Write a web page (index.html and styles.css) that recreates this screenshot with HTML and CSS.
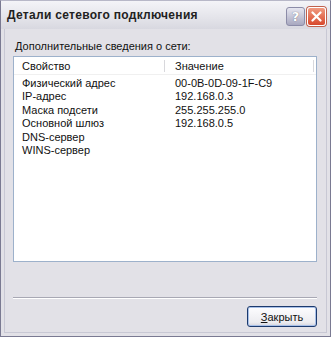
FILE: index.html
```html
<!DOCTYPE html>
<html>
  <head>
    <title>Детали сетевого подключения</title>
    <link rel="stylesheet" href="styles.css">
  </head>
  <body>
    <div class="window">
      <div class="titlebar">
        <span class="title">Детали сетевого подключения</span>
        <div class="buttons">
          <span class="btn-help">?</span>
          <span class="btn-close">
            <svg width="11" height="11" viewBox="0 0 11 11">
              <path d="M1.5 1.5 L9.5 9.5 M9.5 1.5 L1.5 9.5" stroke="#fff" stroke-width="2.2" stroke-linecap="round"/>
            </svg>
          </span>
        </div>
      </div>
      <div class="content">
        <div class="caption"><u>Д</u>ополнительные сведения о сети:</div>
        <div class="listbox">
          <div class="head">
            <div class="col1">Свойство</div>
            <div class="col2">Значение</div>
          </div>
          <table class="rows">
            <tr><td>Физический адрес</td><td>00-0B-0D-09-1F-C9</td></tr>
            <tr><td>IP-адрес</td><td>192.168.0.3</td></tr>
            <tr><td>Маска подсети</td><td>255.255.255.0</td></tr>
            <tr><td>Основной шлюз</td><td>192.168.0.5</td></tr>
            <tr><td>DNS-сервер</td><td></td></tr>
            <tr><td>WINS-сервер</td><td></td></tr>
          </table>
        </div>
        <div class="separator"></div>
        <div class="footer">
          <button class="close-button"><u>З</u>акрыть</button>
        </div>
      </div>
    </div>
  </body>
</html>
```

FILE: styles.css
```css
body {
  margin: 0;
  background-color: #fff;
  font-family: "DejaVu Sans", sans-serif;
}
.window {
  width: 331px;
  height: 337px;
  box-sizing: border-box;
  border: 1px solid #7a7a92;
  border-top-color: #b8b8c8;
  background-color: #e2e1e7;
  display: flex;
  flex-direction: column;
}
.titlebar {
  height: 28px;
  display: flex;
  align-items: center;
  justify-content: space-between;
  padding: 0 4px 0 6px;
  background: linear-gradient(#f4f4f8, #e4e4ea 60%, #d8d8e0);
}
.title {
  font-family: "Liberation Sans", sans-serif;
  font-weight: bold;
  font-size: 12px;
  letter-spacing: 0.3px;
  color: #222;
}
.buttons {
  display: flex;
  gap: 2px;
  margin-top: 2px;
}
.btn-help,
.btn-close {
  width: 19px;
  height: 19px;
  box-sizing: border-box;
  border-radius: 3px;
  display: flex;
  align-items: center;
  justify-content: center;
}
.btn-help {
  background: linear-gradient(#e6e6f0, #a8a8c0);
  border: 1px solid #8c8ca8;
  color: #fff;
  font-weight: bold;
  font-size: 13px;
  text-shadow: 0 0 1px #556;
}
.btn-close {
  background: linear-gradient(#f09a80, #d8482c);
  border: 1px solid #fff;
  box-shadow: 0 0 0 1px #c0604c;
}
.content {
  flex: 1;
  margin: 0 3px 3px;
  border-left: 1px solid #c8c8d4;
  border-right: 1px solid #c8c8d4;
  border-bottom: 1px solid #c8c8d4;
  padding: 8px 9px 0 8px;
  display: flex;
  flex-direction: column;
}
.caption {
  font-family: "Liberation Sans", sans-serif;
  font-size: 11px;
  color: #111;
  margin: 3px 0 4px 2px;
}
.listbox {
  height: 204px;
  background-color: #fff;
  border: 1px solid #9db1cb;
  font-family: "Liberation Sans", sans-serif;
  font-size: 11px;
  color: #111;
}
.head {
  display: flex;
  height: 17px;
  align-items: center;
  border-bottom: 1px solid #f0f0f0;
}
.col1 {
  width: 142px;
  padding-left: 8px;
  border-right: 1px solid #d8d8dc;
}
.col2 {
  padding-left: 10px;
  flex: 1;
  border-right: 1px solid #d8d8dc;
  margin-right: 2px;
}
.rows {
  border-collapse: collapse;
  margin-top: 2px;
}
.rows td {
  padding: 0 0 0 8px;
  height: 13.4px;
  line-height: 13.4px;
}
.rows td:first-child {
  width: 143px;
}
.rows td:last-child {
  padding-left: 10px;
}
.separator {
  margin-top: 35px;
  border-top: 1px solid #a8a8b4;
  border-bottom: 1px solid #fff;
}
.footer {
  display: flex;
  justify-content: flex-end;
  margin-top: 7px;
}
.close-button {
  width: 70px;
  height: 21px;
  font-family: "Liberation Sans", sans-serif;
  font-size: 11px;
  color: #111;
  background: linear-gradient(#fdfdff, #ececf0 80%, #d6d6de);
  border: 1px solid #1c3a6e;
  border-radius: 3px;
  box-shadow: inset 0 0 0 1px #a8c0e8;
  padding: 0;
}
```
